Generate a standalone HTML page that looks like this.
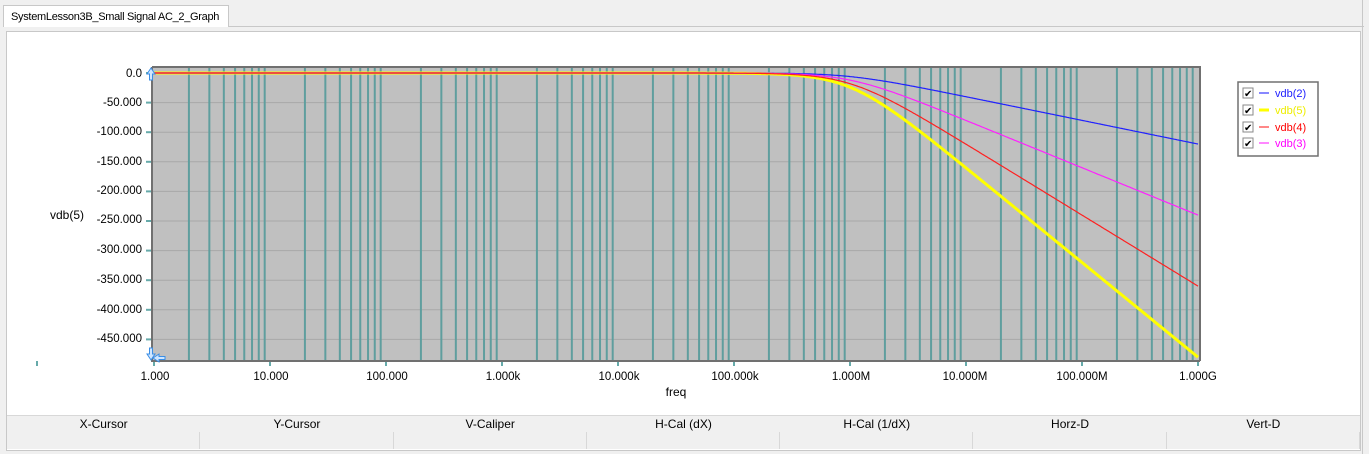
<!DOCTYPE html>
<html><head><meta charset="utf-8"><style>
body{margin:0;width:1369px;height:454px;background:#f0f0f0;font-family:"Liberation Sans",sans-serif;position:relative;overflow:hidden}
.tab{position:absolute;left:3px;top:5px;width:226px;height:22px;background:#fff;border:1px solid #c8c8c8;border-bottom:none;font-size:11px;line-height:22px;padding-left:7px;box-sizing:border-box;white-space:nowrap;letter-spacing:-0.3px}
.panel{position:absolute;left:6px;top:31px;width:1355px;height:420px;border:1px solid #c8c8c8;background:#fff;box-sizing:border-box}
svg{position:absolute;left:0;top:0}
.hdr{position:absolute;left:7px;top:415px;width:1353px;height:17px;display:flex;border-top:1px solid #d8d8d8;border-bottom:1px solid #d8d8d8;background:#f0f0f0}
.hdr div{flex:1;text-align:center;font-size:12px;line-height:16px}
.row{position:absolute;left:7px;top:432px;width:1353px;height:17px;display:flex;background:#f0f0f0}
.row div{flex:1;border-right:1px solid #d8d8d8}
</style></head><body>
<div style="position:absolute;left:229px;top:26px;width:1135px;height:1px;background:#c8c8c8"></div>
<div style="position:absolute;left:1362px;top:0;width:1px;height:454px;background:#c8c8c8"></div>
<div class="tab">SystemLesson3B_Small Signal AC_2_Graph</div>
<div class="panel"></div>
<svg id="s" width="1369" height="454" font-family="Liberation Sans, sans-serif" font-size="11.5">
<rect x="152" y="67" width="1048" height="294" fill="#c0c0c0"/>
<g id="grid"></g>
<g id="curves" fill="none"></g>
<path d="M152 67V361H1200" stroke="#707070" stroke-width="2" fill="none"/>
<path d="M152 67H1200V361" stroke="#707070" stroke-width="2" fill="none"/>
<g text-anchor="end" fill="#000">
<text x="142" y="77">0.0</text><text x="142" y="106">-50.000</text><text x="142" y="135">-100.000</text><text x="142" y="165">-150.000</text><text x="142" y="194">-200.000</text><text x="142" y="223">-250.000</text><text x="142" y="253">-300.000</text><text x="142" y="283">-350.000</text><text x="142" y="313">-400.000</text><text x="142" y="342">-450.000</text>
</g>
<g text-anchor="middle">
<text x="155" y="380">1.000</text><text x="271" y="380">10.000</text><text x="387" y="380">100.000</text><text x="503" y="380">1.000k</text><text x="619" y="380">10.000k</text><text x="735" y="380">100.000k</text><text x="851" y="380">1.000M</text><text x="965" y="380">10.000M</text><text x="1082" y="380">100.000M</text><text x="1198" y="380">1.000G</text>
<text x="676" y="396" font-size="12">freq</text>
</g>
<text x="50" y="219" font-size="12">vdb(5)</text>
<rect x="36" y="361" width="2" height="5" fill="#6aa"/>
<path d="M151 68l-4 6h2.5v6h3v-6h2.5z" fill="#cfe6ff" stroke="#3a8ee6"/>
<path d="M151 360l-4-6h2.5v-6h3v6h2.5z" fill="#cfe6ff" stroke="#3a8ee6"/>
<path d="M153 358l6-4v2.5h6v3h-6v2.5z" fill="#cfe6ff" stroke="#3a8ee6"/>
<g>
<rect x="1238" y="82" width="80" height="74" fill="#fff" stroke="#707070" stroke-width="1.5"/>
<g font-size="11">
<rect x="1243" y="88" width="10" height="10" fill="#fff" stroke="#888"/><text x="1244" y="97" font-size="10">✔</text><line x1="1259" y1="93" x2="1269" y2="93" stroke="#6060ff" stroke-width="1.5"/><text x="1275" y="97" fill="#2020ff">vdb(2)</text>
<rect x="1243" y="105" width="10" height="10" fill="#fff" stroke="#888"/><text x="1244" y="114" font-size="10">✔</text><line x1="1259" y1="110" x2="1269" y2="110" stroke="#ff0" stroke-width="3"/><text x="1275" y="114" fill="#ee0">vdb(5)</text>
<rect x="1243" y="122" width="10" height="10" fill="#fff" stroke="#888"/><text x="1244" y="131" font-size="10">✔</text><line x1="1259" y1="127" x2="1269" y2="127" stroke="#ff6060" stroke-width="1.5"/><text x="1275" y="131" fill="#f00">vdb(4)</text>
<rect x="1243" y="138" width="10" height="10" fill="#fff" stroke="#888"/><text x="1244" y="147" font-size="10">✔</text><line x1="1259" y1="143" x2="1269" y2="143" stroke="#ff60ff" stroke-width="1.5"/><text x="1275" y="147" fill="#f0f">vdb(3)</text>
</g></g>
</svg>
<div class="hdr"><div>X-Cursor</div><div>Y-Cursor</div><div>V-Caliper</div><div>H-Cal (dX)</div><div>H-Cal (1/dX)</div><div>Horz-D</div><div>Vert-D</div></div>
<div class="row"><div></div><div></div><div></div><div></div><div></div><div></div><div></div></div>
<script>
var ns="http://www.w3.org/2000/svg",g=document.getElementById("grid"),c=document.getElementById("curves");
function el(p,t,a){var e=document.createElementNS(ns,t);for(var k in a)e.setAttribute(k,a[k]);p.appendChild(e);return e}
var X0=154,D=116,Y0=73,K=0.592;
for(var i=1;i<10;i++){var y=Y0+i*50*K;el(g,"line",{x1:152,x2:1200,y1:y,y2:y,stroke:"#a8a8a8","stroke-width":1});el(g,"line",{x1:146,x2:152,y1:y,y2:y,stroke:"#6aa","stroke-width":2})}
el(g,"line",{x1:146,x2:152,y1:Y0,y2:Y0,stroke:"#6aa","stroke-width":2});
for(var d=0;d<9;d++)for(var m=2;m<=9;m++){var x=X0+(d+Math.log10(m))*D;el(g,"line",{x1:x,x2:x,y1:68,y2:361,stroke:"#5f9e9e","stroke-width":2})}
for(var d=0;d<=9;d++){var x=X0+d*D;el(g,"line",{x1:x,x2:x,y1:361,y2:366,stroke:"#6aa","stroke-width":2})}
[[8,"#ffff00",3],[2,"#2020ff",1.2],[4,"#ff20ff",1.2],[6,"#ff2020",1.2]].forEach(function(s){var p="";for(var t=0;t<=900;t++){var lf=t/100,r=Math.pow(10,lf-6),db=-10*s[0]*Math.log10(1+r*r);var x=X0+lf*D,y=Y0+(-db)*K;p+=(t?"L":"M")+x.toFixed(1)+" "+y.toFixed(1)}el(c,"path",{d:p,stroke:s[1],"stroke-width":s[2]})});
</script>
</body></html>
